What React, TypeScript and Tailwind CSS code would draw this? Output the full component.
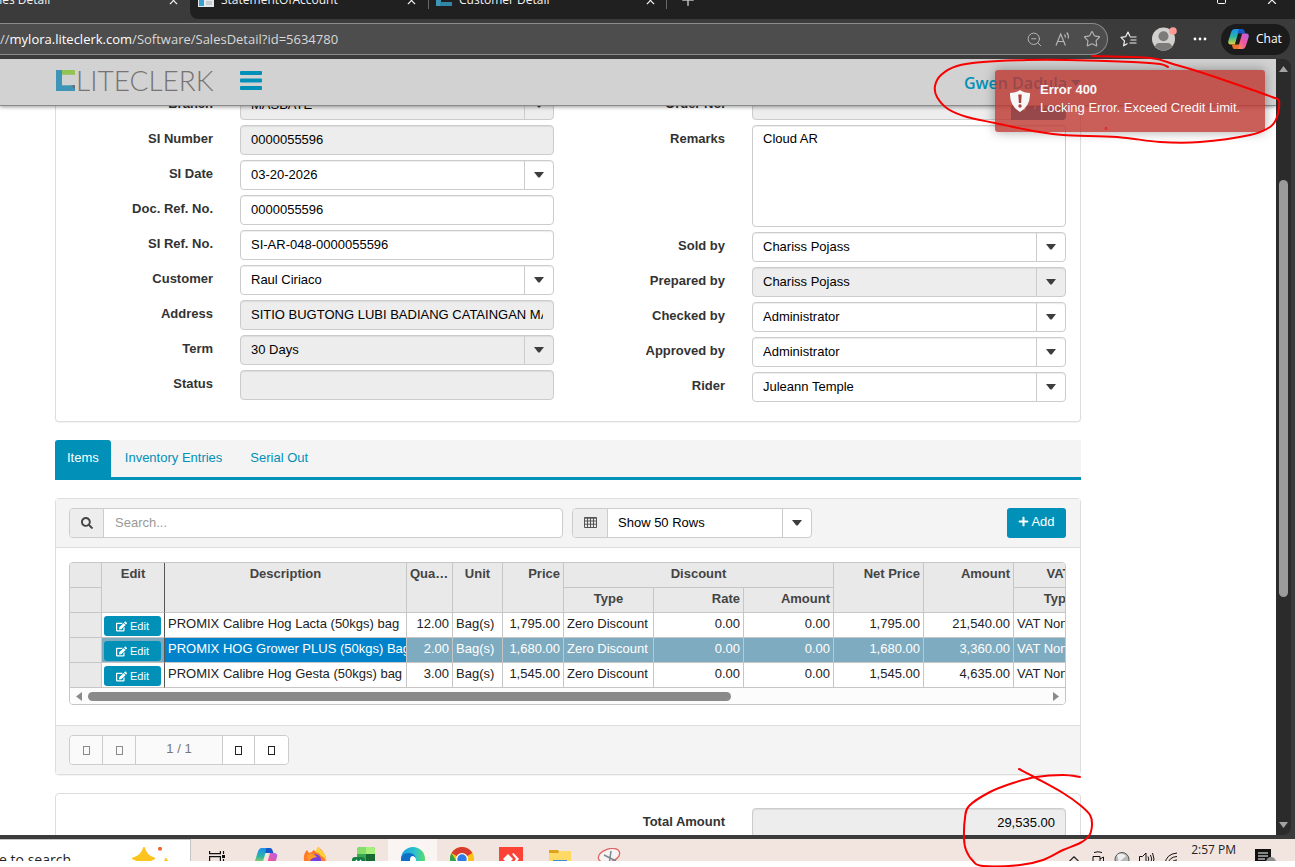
import React from "react";
import { FaSearch, FaPlus, FaEdit } from "react-icons/fa";
import { X, Plus, Star, ZoomOut, ChevronUp } from "lucide-react";

const chrome = "font-['Open_Sans','Noto_Sans',sans-serif]";

type Point = [number, number];

function smooth(points: Point[]): string {
  let d = `M${points[0][0]} ${points[0][1]}`;
  for (let i = 0; i < points.length - 1; i++) {
    const p0 = points[Math.max(0, i - 1)];
    const p1 = points[i];
    const p2 = points[i + 1];
    const p3 = points[Math.min(points.length - 1, i + 2)];
    d += `C${p1[0] + (p2[0] - p0[0]) / 6} ${p1[1] + (p2[1] - p0[1]) / 6} ${p2[0] - (p3[0] - p1[0]) / 6} ${p2[1] - (p3[1] - p1[1]) / 6} ${p2[0]} ${p2[1]}`;
  }
  return d;
}

const errorLoop: Point[] = [
  [1168, 67], [1160, 64], [1133, 62], [1067, 60], [1027, 60], [983, 62], [957, 66], [941, 75], [935, 86], [937, 97], [948, 109],
  [967, 117], [995, 123], [1033, 131], [1063, 135], [1117, 137], [1160, 142], [1200, 142], [1250, 135], [1270, 127],
  [1277, 117], [1279, 101], [1272, 97], [1247, 88], [1200, 72], [1173, 64], [1150, 58], [1092, 56],
];
const totalLoop: Point[] = [
  [1019, 769], [1036, 778], [1063, 793], [1080, 805], [1090, 815], [1092, 825], [1089, 836], [1080, 843], [1063, 850], [1043, 860],
  [1020, 865], [983, 866], [973, 861], [966, 850], [964, 838], [965, 818], [969, 806], [990, 792], [1013, 783], [1036, 777],
  [1063, 775], [1080, 777],
];

function Markup() {
  return (
    <svg className="pointer-events-none absolute left-0 top-0 z-50 h-[867px] w-[1295px]" viewBox="0 0 1295 867" fill="none" stroke="#f80000" strokeWidth="2" strokeLinecap="round" aria-hidden="true">
      <path d={smooth(errorLoop)} />
      <path d={smooth(totalLoop)} />
      <circle cx="1106" cy="128.500" r="0.300" />
    </svg>
  );
}

function Caret() {
  return (
    <svg className="h-[6px] w-[10px]" viewBox="0 0 10 6" fill="#3d3d3d" aria-hidden="true">
      <path d="M0 0h10L5.700 5.500h-1.400z" />
    </svg>
  );
}

function Mark() {
  return (
    <svg className="h-[21px] w-[20px]" viewBox="0 0 20 22" preserveAspectRatio="none" aria-hidden="true">
      <path d="M0 0h6v22H0z" fill="#3f95b8" />
      <path d="M6 0h13v5H6z" fill="#93c353" />
      <path d="M5 16h14v6H5z" fill="#3f95b8" />
      <path d="M15 16h4v4z" fill="#6e6a6c" />
    </svg>
  );
}

function CopilotIcon({ className, id }: { className: string; id: string }) {
  return (
    <svg className={className} viewBox="0 0 24 24" aria-hidden="true">
      <defs>
        <linearGradient id={`${id}a`} x1="0" y1="0" x2="0" y2="1">
          <stop offset="0" stopColor="#1c8df0" />
          <stop offset=".5" stopColor="#29b6a4" />
          <stop offset="1" stopColor="#e3d33a" />
        </linearGradient>
        <linearGradient id={`${id}b`} x1="1" y1="0" x2="0" y2="1">
          <stop offset="0" stopColor="#b263ea" />
          <stop offset=".5" stopColor="#f0559f" />
          <stop offset="1" stopColor="#fda04b" />
        </linearGradient>
      </defs>
      <path d="M15 1H8C5.500 1 4.500 3 3.800 5L1 14c-.8 2.500.3 4 2.500 4H8l4-14c.4-1.500 1.500-3 3-3z" fill={`url(#${id}a)`} />
      <path d="M13 1h3c1.500 0 2.200 1 2.600 2.500L19.500 6H11l.7-2.500C12 2 12.300 1 13 1z" fill="#1657c9" />
      <path d="M9 23h7c2.500 0 3.500-2 4.200-4L23 10c.8-2.500-.3-4-2.500-4H16l-4 14c-.4 1.500-1.500 3-3 3z" fill={`url(#${id}b)`} />
      <path d="M11 23H8c-1.500 0-2.200-1-2.600-2.500L4.800 18H13l-.7 2.500C12 22 11.700 23 11 23z" fill="#f1702f" />
    </svg>
  );
}

function TabStrip() {
  return (
    <div className={`h-[19px] shrink-0 overflow-hidden bg-[#202020] text-[12px] text-[#f2f2f2] ${chrome}`}>
      <div className="-mt-5 flex h-10 items-center">
        <div className="flex h-full w-[190px] items-center justify-between bg-[#3b3b3b] pr-[10px]">
          <span className="-ml-[14px] whitespace-nowrap">Sales Detail</span>
          <X size={13} />
        </div>
        <div className="h-full w-2 bg-[#3b3b3b]">
          <div className="h-[39px] w-2 rounded-bl-lg bg-[#202020]" />
        </div>
        <div className="flex w-[231px] items-center gap-[7px] border-r border-[#686868] pr-[10px]">
          <svg className="h-4 w-4" viewBox="0 0 16 16" aria-hidden="true">
            <path d="M0 0h16v15H0z" fill="#e5e9ec" />
            <path d="M1 0h5v14H1z" fill="#3aa0cf" />
            <path d="M8 9h6v4H8z" fill="#c5ccd2" />
          </svg>
          <span>StatementOfAccount</span>
          <X size={13} className="ml-auto" />
        </div>
        <div className="flex w-[238px] items-center gap-[7px] border-r border-[#686868] pl-[7px] pr-[9px]">
          <svg className="h-4 w-4" viewBox="0 0 16 16" aria-hidden="true">
            <path d="M0 0h5v14H0z" fill="#3f95b8" />
            <path d="M4 10h12v4H4z" fill="#2f86a8" />
            <path d="M5 0h10v3H5z" fill="#93c353" />
          </svg>
          <span>Customer Detail</span>
          <X size={13} className="ml-auto" />
        </div>
        <Plus size={18} className="ml-3 text-[#bdbdbd]" />
        <svg className="ml-auto mr-9 h-3 w-3" viewBox="0 0 12 12" fill="none" stroke="#fff" aria-hidden="true">
          <rect x="0.500" y="0.500" width="8" height="9" rx="1" />
          <path d="M3 -1.500h7q1 0 1 1V6" />
        </svg>
        <X size={14} className="mr-4" />
      </div>
    </div>
  );
}

function AddressBar() {
  return (
    <div className={`flex h-10 shrink-0 items-center bg-[#3b3b3b] ${chrome}`}>
      <div className="flex h-8 flex-1 items-center rounded-r-full border border-l-0 border-[#8c8c8c] bg-[#4d4d4d] pr-[6px]">
        <span className="pt-px text-[13px] text-[#d8d8d8]">
          //<span className="text-white">mylora.liteclerk.com</span>/Software/SalesDetail?id=5634780
        </span>
        <div className="ml-auto flex items-center gap-3 text-[#b5b5b5]">
          <ZoomOut size={17} strokeWidth={1.4} />
          <svg className="h-4 w-4" viewBox="0 0 16 16" fill="none" stroke="currentColor" strokeWidth="1.2" aria-hidden="true">
            <path d="M1 14.500 5.700 3l4.700 11.500M2.700 10.500h6M9.500 3.500q1.200 1.300.8 3.200M11.700 1.500q2.400 2.700 1.500 6" />
          </svg>
          <Star size={18} strokeWidth={1.500} />
        </div>
      </div>
      <svg className="ml-3 h-4 w-[17px]" viewBox="0 0 17 16" fill="none" stroke="#f0f0f0" strokeWidth="1.2" strokeLinejoin="round" aria-hidden="true">
        <path d="M10 5.500 8 1 5.800 5.600 1 6.300l3.500 3.500-.9 5L7.500 12.500M10 6h6.500M10.500 9h6M9.500 12h7" />
      </svg>
      <svg className="ml-[15px] h-6 w-[26px]" viewBox="0 0 26 24" aria-hidden="true">
        <circle cx="11.500" cy="12" r="11.500" fill="#d2d0ce" />
        <circle cx="11.500" cy="9.300" r="5" fill="#7d7b79" />
        <path d="M3 19.500q1-3.500 4-3.500h9q3 0 4 3.500-3.500 4-8.500 4T3 19.500z" fill="#7d7b79" />
        <circle cx="21" cy="4" r="3.800" fill="#ff9a94" />
      </svg>
      <svg className="ml-[15px] h-1 w-[14px]" viewBox="0 0 14 4" fill="#fff" aria-hidden="true">
        <circle cx="2" cy="2" r="1.400" /><circle cx="7" cy="2" r="1.400" /><circle cx="12" cy="2" r="1.400" />
      </svg>
      <button className="ml-[14px] mr-[5px] flex h-[31px] w-[69px] items-center gap-[6px] rounded-full bg-[#1b1b1b] pl-[6px] text-[12px] text-white">
        <CopilotIcon className="h-[22px] w-[23px]" id="bar" />
        Chat
      </button>
    </div>
  );
}

function Row({ label, id, children }: { label: string; id: string; children: React.ReactNode }) {
  return (
    <div className="flex">
      <label htmlFor={id} className="mr-[27px] w-[157px] shrink-0 text-right font-bold leading-[27px] text-[#333]">{label}</label>
      <div className="min-w-0 flex-1 pr-[14px]">{children}</div>
    </div>
  );
}

const field = "block h-[30px] w-full rounded-[4px] border border-[#ccc] px-[10px] text-black shadow-[inset_0_1px_1px_rgba(0,0,0,0.075)] outline-none";

function TextField({ label, value, disabled, right }: { label: string; value: string; disabled?: boolean; right?: boolean }) {
  const id = label.replace(/\W/g, "");
  return (
    <Row label={label} id={id}>
      <input id={id} defaultValue={value} readOnly={disabled} className={`${field} pb-[2px] ${disabled ? "bg-[#ededed]" : "bg-white"} ${right ? "text-right" : ""}`} />
    </Row>
  );
}

function SelectField({ label, value, disabled }: { label: string; value: string; disabled?: boolean }) {
  const id = label.replace(/\W/g, "");
  return (
    <Row label={label} id={id}>
      <div className="relative">
        <select id={id} className={`${field} appearance-none ${disabled ? "bg-[#ededed]" : "bg-white"}`}>
          <option>{value}</option>
        </select>
        <span className="pointer-events-none absolute inset-y-px right-px flex w-[29px] items-center justify-center border-l border-[#ccc]"><Caret /></span>
      </div>
    </Row>
  );
}

const lines = [
  { name: "PROMIX Calibre Hog Lacta (50kgs) bag", qty: "12.00", price: "1,795.00", amount: "21,540.00" },
  { name: "PROMIX HOG Grower PLUS (50kgs) Bag", qty: "2.00", price: "1,680.00", amount: "3,360.00" },
  { name: "PROMIX Calibre Hog Gesta (50kgs) bag", qty: "3.00", price: "1,545.00", amount: "4,635.00" },
];

const head = "h-[25px] border-b border-r border-[#c6c6c6] bg-[#e9e9e9] px-[3px] py-0 align-top font-bold leading-[22px] text-[#444] truncate";
const cell = "h-[25px] border-b border-r border-[#c6c6c6] px-[3px] py-0 align-top leading-[22px] truncate";

function ItemsTable() {
  return (
    <div className="overflow-hidden rounded-[4px] border border-[#c6c6c6]">
      <div className="overflow-hidden">
        <table className="w-[1034px] table-fixed border-separate border-spacing-0">
          <colgroup>
            <col className="w-[32px]" /><col className="w-[63px]" /><col className="w-[242px]" /><col className="w-[46px]" />
            <col className="w-[50px]" /><col className="w-[61px]" /><col className="w-[90px]" /><col className="w-[90px]" />
            <col className="w-[90px]" /><col className="w-[90px]" /><col className="w-[90px]" /><col className="w-[90px]" />
          </colgroup>
          <thead>
            <tr>
              <th className={head} />
              <th rowSpan={2} className={`${head} border-r-[#555]`}>Edit</th>
              <th rowSpan={2} className={head}>Description</th>
              <th rowSpan={2} className={head}>Quantity</th>
              <th rowSpan={2} className={head}>Unit</th>
              <th rowSpan={2} className={`${head} text-right`}>Price</th>
              <th colSpan={3} className={head}>Discount</th>
              <th rowSpan={2} className={`${head} text-right`}>Net Price</th>
              <th rowSpan={2} className={`${head} text-right`}>Amount</th>
              <th className={head}>VAT</th>
            </tr>
            <tr>
              <th className={head} />
              <th className={head}>Type</th>
              <th className={`${head} text-right`}>Rate</th>
              <th className={`${head} text-right`}>Amount</th>
              <th className={head}>Type</th>
            </tr>
          </thead>
          <tbody>
            {lines.map((line, i) => {
              const active = i === 1;
              const tone = active ? "bg-[#7fabc0] text-white" : "bg-white text-[#222]";
              return (
                <tr key={line.name} className={tone}>
                  <td className={`${cell} bg-[#e9e9e9]`} />
                  <td className="h-[25px] border-b border-r border-b-[#c6c6c6] border-r-[#555] p-0">
                    <button className="ml-[2px] mt-[2px] flex h-5 w-[57px] items-center justify-center gap-[3px] rounded-[3px] bg-[#0090b8] text-[11px] text-white">
                      <FaEdit size={11} />Edit
                    </button>
                  </td>
                  <td className={`h-[25px] overflow-hidden whitespace-nowrap border-b border-r border-[#c6c6c6] py-0 pl-[3px] pr-0 align-top leading-[22px] ${active ? "bg-[#0083ca]" : ""}`}>{line.name}</td>
                  <td className={`${cell} text-right`}>{line.qty}</td>
                  <td className={cell}>Bag(s)</td>
                  <td className={`${cell} text-right`}>{line.price}</td>
                  <td className={cell}>Zero Discount</td>
                  <td className={`${cell} text-right`}>0.00</td>
                  <td className={`${cell} text-right`}>0.00</td>
                  <td className={`${cell} text-right`}>{line.price}</td>
                  <td className={`${cell} text-right`}>{line.amount}</td>
                  <td className={cell}>VAT None</td>
                </tr>
              );
            })}
          </tbody>
        </table>
      </div>
      <div className="flex h-4 items-center bg-[#fcfcfc] px-[6px]">
        <svg className="h-[9px] w-[6px]" viewBox="0 0 6 9" fill="#8a8a8a" aria-hidden="true"><path d="M6 0v9L0 4.500z" /></svg>
        <div className="mx-[6px] flex-1"><div className="h-[9px] w-[67%] rounded-full bg-[#8a8a8a]" /></div>
        <svg className="h-[9px] w-[6px]" viewBox="0 0 6 9" fill="#8a8a8a" aria-hidden="true"><path d="M0 0v9l6-4.500z" /></svg>
      </div>
    </div>
  );
}

function PageButton({ label, dim, className }: { label: string; dim?: boolean; className: string }) {
  return (
    <button aria-label={label} className={`flex w-[33px] items-center justify-center border-[#ccc] ${dim ? "bg-[#fafafa]" : "bg-white"} ${className}`}>
      <span className={`h-[9px] w-[7px] border ${dim ? "border-[#8a8a8a]" : "border-[#222]"}`} />
    </button>
  );
}

function ItemsPanel() {
  return (
    <section className="mt-[18px] rounded-[4px] border border-[#ddd] bg-white shadow-[0_1px_1px_rgba(0,0,0,0.05)]">
      <div className="flex items-center border-b border-[#ddd] bg-[#f4f4f4] py-[9px] pl-[13px] pr-[14px]">
        <div className="flex h-[30px] w-[494px] rounded-[4px] border border-[#ccc] bg-white">
          <span className="flex w-[34px] items-center justify-center rounded-l-[3px] border-r border-[#ccc] bg-[#ededed] text-[#444]"><FaSearch size={12} /></span>
          <input aria-label="Search" placeholder="Search..." className="min-w-0 flex-1 bg-transparent px-[11px] outline-none placeholder:text-[#999]" />
        </div>
        <div className="relative ml-[9px] flex h-[30px] w-[240px] rounded-[4px] border border-[#ccc] bg-white">
          <span className="flex w-[35px] items-center justify-center rounded-l-[3px] border-r border-[#ccc] bg-[#ededed] pb-[2px]">
            <svg className="h-[11px] w-[13px]" viewBox="0 0 13 11" fill="none" stroke="#555" aria-hidden="true">
              <path d="M.5.500h12v10H.5zM.5 4h12M.5 7.200h12M3.500 1v9.500M6.500 1v9.500M9.500 1v9.500M.5 1.200h12" />
            </svg>
          </span>
          <select aria-label="Rows shown" className="min-w-0 flex-1 appearance-none bg-transparent px-[10px] text-black outline-none">
            <option>Show 50 Rows</option>
          </select>
          <span className="pointer-events-none absolute inset-y-0 right-0 flex w-[29px] items-center justify-center border-l border-[#ccc]"><Caret /></span>
        </div>
        <button className="ml-auto flex h-[30px] w-[59px] items-center justify-center gap-[2px] rounded-[3px] bg-[#0090b8] pb-[3px] text-white">
          <FaPlus size={11} />Add
        </button>
      </div>
      <div className="pb-5 pl-[13px] pr-[14px] pt-[14px]"><ItemsTable /></div>
      <div className="border-t border-[#ddd] bg-[#f4f4f4] px-[13px] py-[9px]">
        <div className="flex h-[30px] w-[220px] overflow-hidden rounded-[4px] border border-[#ccc]">
          <PageButton label="First page" dim className="border-r" />
          <PageButton label="Previous page" dim className="border-r" />
          <span className="flex-1 bg-[#fafafa] text-center leading-[25px] text-[#777]">1 / 1</span>
          <PageButton label="Next page" className="border-x" />
          <PageButton label="Last page" className="" />
        </div>
      </div>
    </section>
  );
}

function Toast() {
  return (
    <div role="alert" className="absolute right-[30px] top-[11px] z-30 flex w-[270px] rounded-[3px] bg-[#bd362f]/80 pb-[15px] pl-[15px] pt-[11px] font-['Liberation_Sans',Arial,sans-serif] text-[13px] leading-[18px] text-[#fafafa] shadow-[0_0_12px_rgba(0,0,0,0.35)]">
      <svg className="mt-[9px] h-[22px] w-5 shrink-0" viewBox="0 0 20 22" aria-hidden="true">
        <path d="M10 0q4 3 10 3 .5 13-10 19Q-.5 16 0 3 6 3 10 0z" fill="#f7f7f7" />
        <path d="M8.300 4.500h3.400l-.6 8.500H8.900z" fill="#a8403c" />
        <circle cx="10" cy="16" r="1.700" fill="#a8403c" />
      </svg>
      <div className="ml-[10px] whitespace-nowrap">
        <div className="font-bold">Error 400</div>
        <div>Locking Error. Exceed Credit Limit.</div>
      </div>
    </div>
  );
}

function AppPage() {
  return (
    <div className="relative flex min-h-0 flex-1 bg-[#3b3b3b] pr-1">
      <div className="min-w-0 flex-1 overflow-hidden bg-white font-['Liberation_Sans',Arial,sans-serif] text-[13px]">
        <header className="relative z-10 flex h-[47px] items-center border-b border-[#8a8a8a] bg-[#d2d2d2] pb-[3px] pl-[56px] pr-[195px] shadow-[0_1px_4px_rgba(0,0,0,0.4)]">
          <a href="#home" aria-label="Liteclerk" className="flex items-center">
            <Mark />
            <span className="-mt-[2px] font-['Lato',sans-serif] text-[28px] font-light leading-[30px] text-[#777274]">LITECLERK</span>
          </a>
          <button aria-label="Menu" className="ml-[26px] text-[#0090b8]">
            <svg className="h-[19px] w-[22px]" viewBox="0 0 22 19" fill="currentColor" aria-hidden="true">
              <rect width="22" height="4" rx="1" /><rect y="7.500" width="22" height="4" rx="1" /><rect y="15" width="22" height="4" rx="1" />
            </svg>
          </button>
          <button className={`ml-auto flex items-center gap-1 pt-[5px] text-[16px] font-semibold text-[#0090b8] ${chrome}`}>
            Gwen Dadula
            <svg className="h-[6px] w-[10px]" viewBox="0 0 10 6" fill="currentColor" aria-hidden="true"><path d="M0 0h10L5 6z" /></svg>
          </button>
        </header>
        <main className="-mt-4 pl-[55px] pr-[195px]">
          <form className="grid grid-cols-2 rounded-b-[4px] border border-t-0 border-[#ddd] pb-[19px] shadow-[0_1px_1px_rgba(0,0,0,0.05)]">
            <div className="flex flex-col gap-[5px]">
              <SelectField label="Branch" value="MASBATE" disabled />
              <TextField label="SI Number" value="0000055596" disabled />
              <SelectField label="SI Date" value="03-20-2026" />
              <TextField label="Doc. Ref. No." value="0000055596" />
              <TextField label="SI Ref. No." value="SI-AR-048-0000055596" />
              <SelectField label="Customer" value="Raul Ciriaco" />
              <TextField label="Address" value="SITIO BUGTONG LUBI BADIANG CATAINGAN MASBATE" disabled />
              <SelectField label="Term" value="30 Days" disabled />
              <TextField label="Status" value="" disabled />
            </div>
            <div className="flex flex-col gap-[5px]">
              <Row label="Order No." id="order">
                <div className="relative">
                  <input id="order" readOnly className={`${field} bg-[#ededed]`} />
                  <button type="button" className="absolute inset-y-0 right-0 flex w-[55px] items-center justify-center gap-[3px] rounded-r-[4px] bg-[#0090b8] text-white"><FaPlus size={11} />Pick</button>
                </div>
              </Row>
              <Row label="Remarks" id="remarks">
                <textarea id="remarks" defaultValue="Cloud AR" className="block h-[102px] w-full resize-none rounded-[4px] border border-[#ccc] px-[10px] py-1 leading-[18px] text-black shadow-[inset_0_1px_1px_rgba(0,0,0,0.075)] outline-none" />
              </Row>
              <SelectField label="Sold by" value="Chariss Pojass" />
              <SelectField label="Prepared by" value="Chariss Pojass" disabled />
              <SelectField label="Checked by" value="Administrator" />
              <SelectField label="Approved by" value="Administrator" />
              <SelectField label="Rider" value="Juleann Temple" />
            </div>
          </form>
          <nav className="mt-[18px] flex h-10 border-b-[3px] border-[#0090b8] bg-[#f4f4f4] leading-[35px] text-[#0090b8]">
            <a href="#items" className="-mb-[3px] rounded-t-[3px] bg-[#0090b8] px-3 text-white">Items</a>
            <a href="#inventory" className="px-[14px]">Inventory Entries</a>
            <a href="#serial" className="px-[14px]">Serial Out</a>
          </nav>
          <ItemsPanel />
          <section className="mt-[18px] grid grid-cols-2 rounded-t-[4px] border border-[#ddd] pb-5 pt-[14px]">
            <div className="col-start-2"><TextField label="Total Amount" value="29,535.00" disabled right /></div>
          </section>
        </main>
      </div>
      <div className="flex w-[15px] shrink-0 flex-col items-center rounded-tr-lg rounded-br-lg bg-[#2b2b2b] py-[7px]">
        <svg className="h-[6px] w-[9px]" viewBox="0 0 9 6" fill="#a3a3a3" aria-hidden="true"><path d="M4.500 0 9 6H0z" /></svg>
        <div className="w-full flex-1 px-[3px] pt-[108px]"><div className="h-[65%] rounded-full bg-[#9b9b9b]" /></div>
        <svg className="h-[6px] w-[9px]" viewBox="0 0 9 6" fill="#a3a3a3" aria-hidden="true"><path d="M4.500 6 9 0H0z" /></svg>
      </div>
      <Toast />
    </div>
  );
}

const slot = "flex h-10 w-[49px] shrink-0 items-center justify-center";

function Taskbar() {
  return (
    <div className={`h-[22px] shrink-0 overflow-hidden bg-[#f2e5df] text-[#222] ${chrome}`}>
      <div className="flex h-10">
        <div className="flex w-[191px] items-center border-r border-t border-[#c4c4c4] bg-white">
          <div className="flex w-[71px] justify-end overflow-hidden whitespace-nowrap text-[14px] leading-5">Type here to search</div>
          <svg className="ml-[61px] h-[26px] w-[38px]" viewBox="0 0 38 26" aria-hidden="true">
            <path d="M12 1q2 8 10 10.500-8 2.500-10 11Q10 14 1 11.500 10 9 12 1z" fill="#fbc41f" strokeWidth="2" stroke="#fbc41f" strokeLinejoin="round" />
            <circle cx="28" cy="1.800" r="2" fill="#f1602a" />
            <path d="M34 11q1 3 3 4-2 1-3 4-1-3-3-4 2-1 3-4z" fill="#fbc41f" stroke="#fbc41f" />
          </svg>
        </div>
        <div className="flex pl-px">
          <button aria-label="Task view" className={slot}>
            <svg className="h-4 w-4" viewBox="0 0 16 16" fill="none" stroke="#111" strokeWidth="1.200" aria-hidden="true">
              <path d="M.6 0v2.600h10.800V0M.6 16V5.600h10.800V16M14.500 0v3M14.500 8v8" /><path d="M13 4h3v3h-3z" fill="#111" stroke="none" />
            </svg>
          </button>
          <button aria-label="Copilot" className={slot}><CopilotIcon className="h-6 w-6" id="task" /></button>
          <button aria-label="Firefox" className={slot}>
            <svg className="h-6 w-6" viewBox="0 0 24 24" aria-hidden="true">
              <path d="M1 14Q0 7 4 3l2 3q2-1 3-1 0-1 2-2l2 2 2-5q6 4 8 11 1 9-7 12-8 2-13-3-2-3-2-6z" fill="#ff7a2a" />
              <path d="M12 5q1-3 4-5 1 3 4 5 4 5 3 10-1-5-5-6-1-3-6-4z" fill="#ffd23c" />
              <circle cx="12" cy="13" r="6" fill="#7440e0" /><path d="M4 8q4-3 8 0l2 2-4 1q-3 1-3 4-3-2-3-7z" fill="#ff9a28" />
            </svg>
          </button>
          <button aria-label="Excel" className={slot}>
            <svg className="h-6 w-6" viewBox="0 0 24 24" aria-hidden="true">
              <rect x="5" width="18" height="24" rx="3" fill="#38a852" /><path d="M8 0h6v7H5V3q0-3 3-3z" fill="#87dd6b" /><path d="M14 0h6q3 0 3 3v4h-9z" fill="#a7f07b" />
              <path d="M14 7h9v9h-9z" fill="#176b32" /><rect y="10" width="13" height="13" rx="3" fill="#158044" /><path d="m4 13 5 7m0-7-5 7" stroke="#fff" strokeWidth="1.500" />
            </svg>
          </button>
          <button aria-label="Edge" className={`${slot} bg-[#faf5f2]`}>
            <svg className="h-6 w-6" viewBox="0 0 24 24" aria-hidden="true">
              <defs><linearGradient id="edge"><stop stopColor="#189be0" /><stop offset=".6" stopColor="#2cc4cc" /><stop offset="1" stopColor="#5bdc67" /></linearGradient></defs>
              <circle cx="12" cy="12" r="12" fill="url(#edge)" />
              <path d="M0 13Q0 6 8 6q6 0 7 6-2-2-4-1-4 3 0 8 4 4 9 1-4 4-9 4Q1 23 0 13z" fill="#0f6fc6" />
              <path d="M9 13q0-4 3-4 3 1 3 4-1 2 1 4-6 1-7-4z" fill="#fff" />
            </svg>
          </button>
          <button aria-label="Chrome" className={slot}>
            <svg className="h-6 w-6" viewBox="0 0 24 24" aria-hidden="true">
              <circle cx="12" cy="12" r="12" fill="#fbc116" /><path d="M12 12 1.600 6A12 12 0 0 1 22.400 6z" fill="#da3b2f" /><path d="M1.600 6 12 24A12 12 0 0 1 1.600 6z" fill="#35a24e" />
              <circle cx="12" cy="12" r="6" fill="#fff" /><circle cx="12" cy="12" r="4.700" fill="#2f7be8" />
            </svg>
          </button>
          <button aria-label="AnyDesk" className={slot}>
            <svg className="h-6 w-6" viewBox="0 0 24 24" aria-hidden="true">
              <path d="M0 0h24v24H0z" fill="#fd4236" /><path d="m9 7 5 5-5 5-5-5z" fill="#fff" /><path d="m13 7 1.500-1L20 12l-5.500 6-1.500-1 4-5z" fill="#fff" />
            </svg>
          </button>
          <button aria-label="File Explorer" className={slot}>
            <svg className="h-[18px] w-[22px]" viewBox="0 0 22 18" aria-hidden="true">
              <path d="M0 0h9l2 3H0z" fill="#dfa21b" /><path d="M0 3h9l2-2h11v17H0z" fill="#ffd966" /><path d="M4 10h14v8H4z" fill="#3f8fd6" />
            </svg>
          </button>
          <button aria-label="Snipping Tool" className={slot}>
            <svg className="h-[22px] w-6" viewBox="0 0 24 22" fill="none" aria-hidden="true">
              <ellipse cx="12" cy="7.500" rx="11" ry="6.500" transform="rotate(-18 12 7.500)" fill="#f7f3f3" stroke="#e06565" strokeWidth="1.300" />
              <path d="m7 7 12 6M14 3l-2 14" stroke="#7d8790" strokeWidth="1.500" /><path d="M11 13h9l-2 4h-8z" fill="#4a96c9" />
            </svg>
          </button>
        </div>
        <div className="ml-auto flex items-center gap-[9px] border-[#c9bdb8] pr-[5px]">
          <ChevronUp size={18} strokeWidth={1.500} />
          <svg className="h-4 w-[13px]" viewBox="0 0 13 16" fill="none" stroke="#111" aria-hidden="true"><path d="M2 1.500Q6 0 10 1.500M1 5.500h7v9H1zM8 8l3.500-2v8L8 12" /></svg>
          <svg className="h-4 w-4" viewBox="0 0 16 16" aria-hidden="true"><circle cx="8" cy="8.500" r="7" fill="#b9b9b9" stroke="#555" /><path d="M3 4q5-3 9 1l-7 6z" fill="#eee" /></svg>
          <svg className="h-4 w-4" viewBox="0 0 16 16" fill="none" stroke="#111" aria-hidden="true"><path d="M.5 5.500h3L7 2v12l-3.500-3.500h-3zM9 5.500q1.500 2.500 0 5M11.500 4q2.500 4 0 8M13.500 2q3 6 0 12" /></svg>
          <svg className="h-[14px] w-[14px]" viewBox="0 0 14 14" fill="none" stroke="#111" aria-hidden="true"><path d="M1 12Q2 2 13 1M4 12q1-7 9-7.500M7 12q.5-3.500 6-4" /></svg>
          <span className="-mt-[18px] ml-1 text-[12px]">2:57 PM</span>
          <svg className="ml-[10px] mr-[14px] h-5 w-[21px]" viewBox="0 0 21 20" aria-hidden="true">
            <path d="M0 0h16v15H6l-3 4v-4H0z" fill="#111" /><path d="M3 4h10M3 7h10M3 10h7" stroke="#fff" /><circle cx="16" cy="13" r="5" fill="#8e8e8e" />
          </svg>
        </div>
      </div>
    </div>
  );
}

export default function App() {
  return (
    <div className="relative flex h-screen flex-col overflow-hidden bg-white pb-[6px]">
      <TabStrip />
      <AddressBar />
      <AppPage />
      <div className="h-1 shrink-0 bg-[#3b3b3b]" />
      <Taskbar />
      <Markup />
    </div>
  );
}
